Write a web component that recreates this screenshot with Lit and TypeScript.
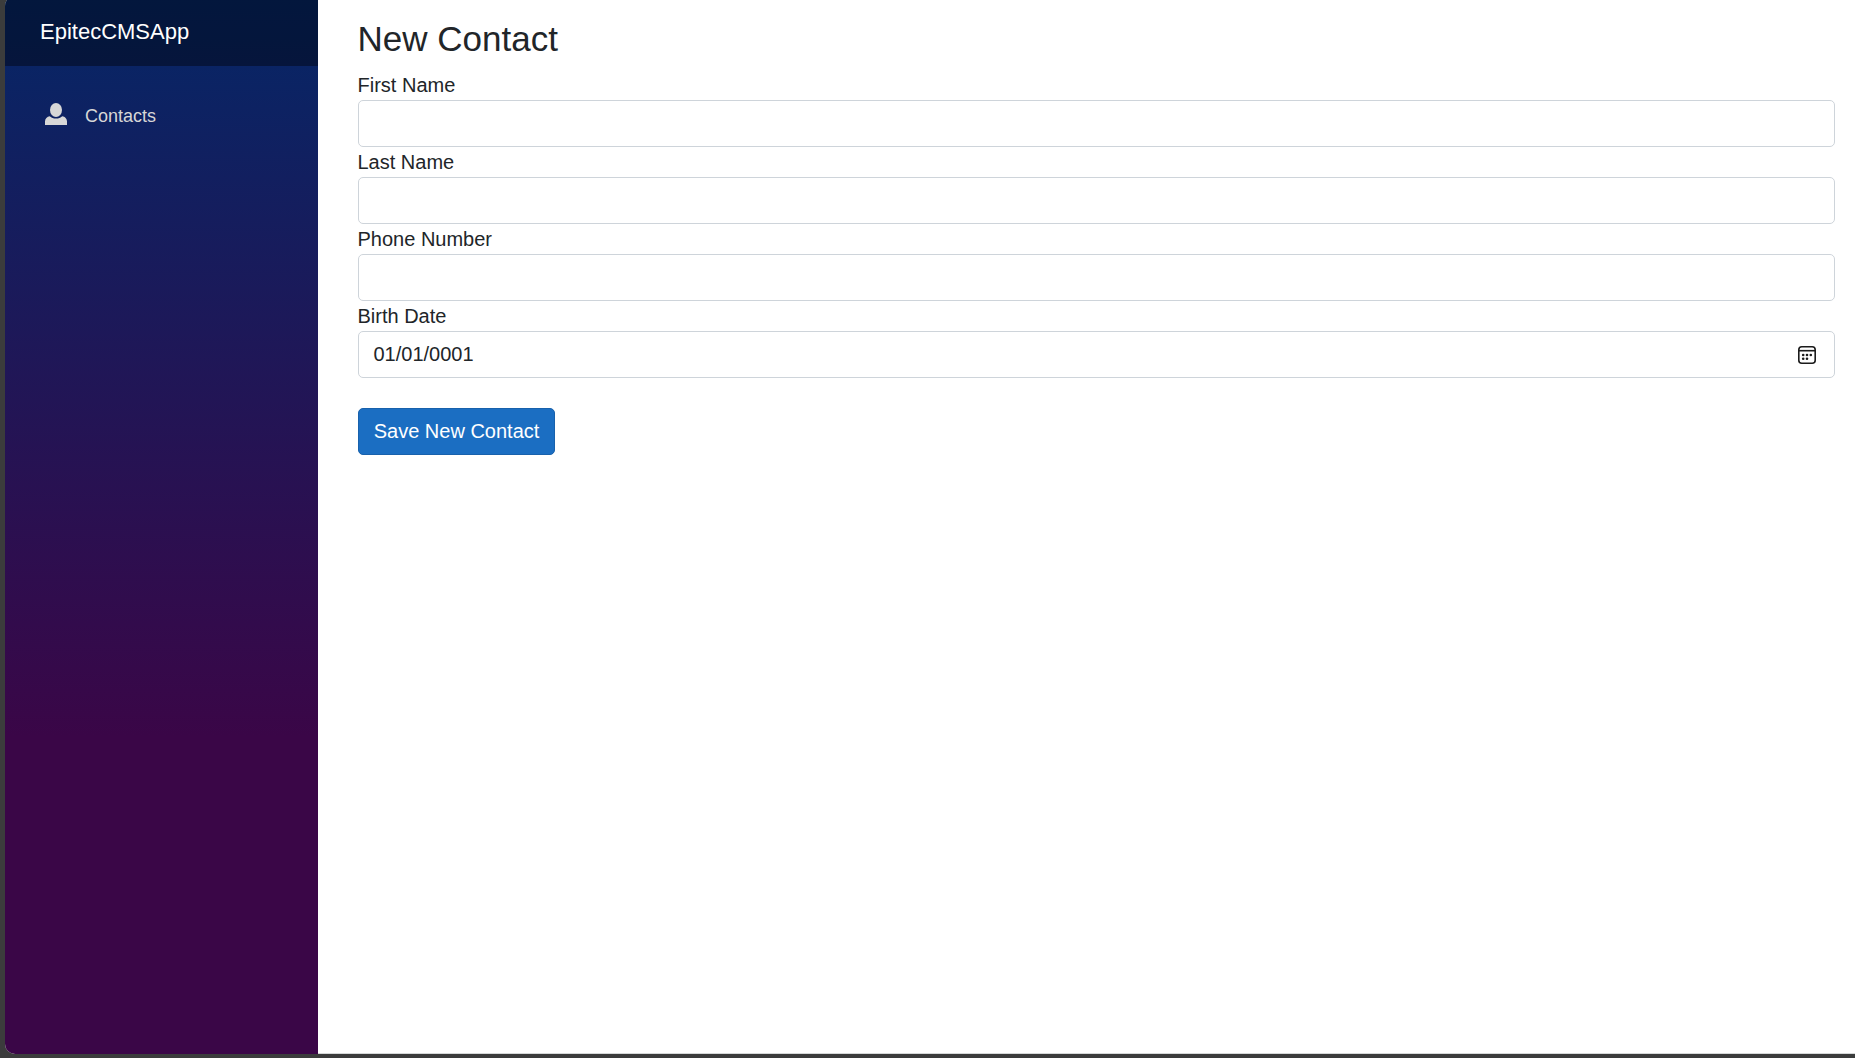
import { LitElement, html, css } from "lit";
import { customElement } from "lit/decorators.js";

interface Field {
  label: string;
  value: string;
  date?: boolean;
}

const FIELDS: Field[] = [
  { label: "First Name", value: "" },
  { label: "Last Name", value: "" },
  { label: "Phone Number", value: "" },
  { label: "Birth Date", value: "01/01/0001", date: true },
];

@customElement("nav-menu")
class NavMenu extends LitElement {
  static styles = css`
    :host {
      display: block;
      box-sizing: border-box;
      width: 313px;
      flex: none;
      background: linear-gradient(180deg, rgb(5, 39, 103) 0%, #3a0647 70%);
    }
    .brand {
      box-sizing: border-box;
      height: 70px;
      padding: 1px 0 0 35px;
      display: flex;
      align-items: center;
      background: rgba(0, 0, 0, 0.4);
      color: #fff;
      font-size: 22px;
    }
    .nav {
      padding: 20px 20px 0;
    }
    .link {
      display: flex;
      align-items: center;
      height: 60px;
      padding-left: 20px;
      color: #d7d7d7;
      font-size: 18px;
    }
    .icon {
      width: 22px;
      height: 22px;
      margin: 0 18px 4px 0;
      fill: currentColor;
    }
  `;

  render() {
    return html`
      <div class="brand">EpitecCMSApp</div>
      <nav class="nav">
        <div class="link">
          <svg class="icon" viewBox="0 0 22 22">
            <ellipse cx="11" cy="7" rx="6" ry="7" />
            <path
              d="M4.8 13.2C2.1 13.5 0 15.7 0 18.4V22h22v-3.6c0-2.7-2.1-4.9-4.8-5.2-1.6 1.5-3.7 2.3-6.2 2.3s-4.6-.8-6.2-2.3z"
            />
          </svg>
          <span>Contacts</span>
        </div>
      </nav>
    `;
  }
}

@customElement("app-root")
class AppRoot extends LitElement {
  static styles = css`
    :host {
      display: block;
      box-sizing: border-box;
      height: 1058px;
      padding: 0 0 4px 5px;
      overflow: hidden;
      background: #3b3c3c;
      font-family: "Liberation Sans", Arial, sans-serif;
      font-size: 20px;
      line-height: 30px;
      color: #212529;
    }
    .window {
      box-sizing: border-box;
      display: flex;
      height: 1058px;
      margin-top: -4px;
      border-radius: 10px 0 0 10px;
      overflow: hidden;
      background: #fff;
    }
    main {
      flex: 1;
      box-sizing: border-box;
      padding: 22px 20px 0 40px;
      border-bottom: 1px solid #d5d8d8;
    }
    h3 {
      margin: 0 0 10px -0.5px;
      font-size: 35px;
      line-height: 42px;
      font-weight: 400;
    }
    .label {
      display: block;
      height: 30px;
      margin-left: -0.5px;
    }
    .control {
      box-sizing: border-box;
      display: flex;
      align-items: center;
      justify-content: space-between;
      height: 47px;
      padding: 0 18px 1px 14.5px;
      border: 1px solid #ced4da;
      border-radius: 5px;
      background: #fff;
    }
    .calendar {
      width: 18px;
      height: 18px;
      margin-top: 2px;
      fill: none;
      stroke: #1b1b1b;
      stroke-width: 1.6;
    }
    .dots {
      fill: #1b1b1b;
      stroke: none;
    }
    .save {
      display: block;
      box-sizing: border-box;
      width: 197px;
      height: 47px;
      margin-top: 30px;
      padding: 0 0 1px;
      border: 1px solid #1861ac;
      border-radius: 5px;
      background: #1b6ec2;
      color: #fff;
      font: inherit;
    }
  `;

  private calendarIcon() {
    return html`
      <svg class="calendar" viewBox="0 0 18 18">
        <rect x="0.8" y="0.8" width="16.4" height="16.4" rx="3" />
        <path d="M1 4.7h16" />
        <g class="dots">
          <circle cx="5.2" cy="9" r="1.3" />
          <circle cx="9" cy="9" r="1.3" />
          <circle cx="12.8" cy="9" r="1.3" />
          <circle cx="5.2" cy="12.7" r="1.3" />
          <circle cx="9" cy="12.7" r="1.3" />
        </g>
      </svg>
    `;
  }

  render() {
    return html`
      <div class="window">
        <nav-menu></nav-menu>
        <main>
          <h3>New Contact</h3>
          ${FIELDS.map(
            (field) => html`
              <span class="label">${field.label}</span>
              <div class="control">
                <span>${field.value}</span>
                ${field.date ? this.calendarIcon() : null}
              </div>
            `
          )}
          <button class="save">Save New Contact</button>
        </main>
      </div>
    `;
  }
}
